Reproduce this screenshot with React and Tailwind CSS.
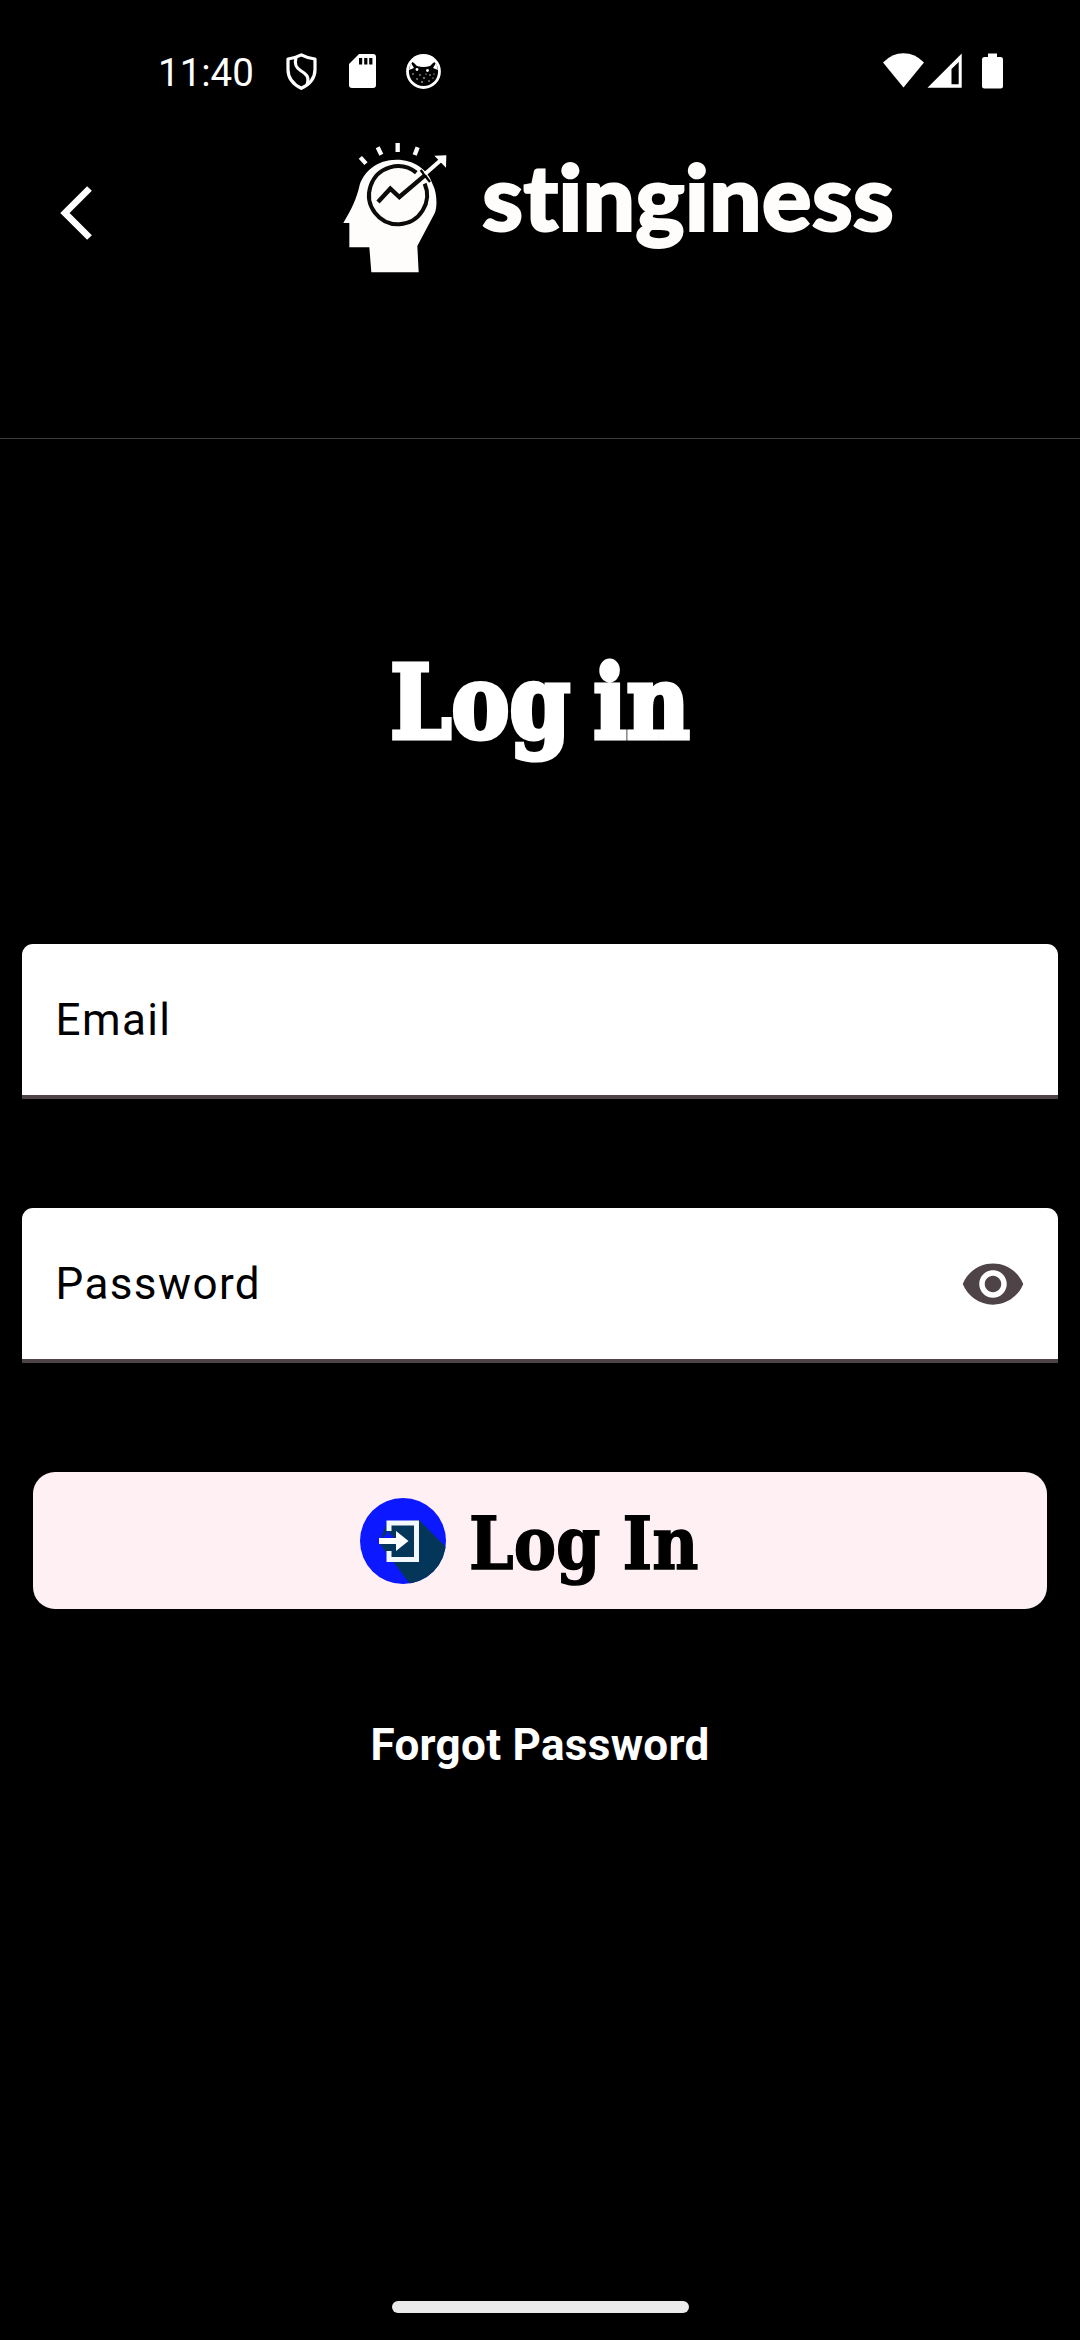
function StatusBar() {
  return (
    <div className="flex h-[132px] items-start pt-[40px] text-white">
      <span className="ml-[158px] w-[118px] whitespace-nowrap pt-[10px] text-[38.5px] leading-[46px]">11:40</span>
      <svg className="h-[60px] w-[180px]" viewBox="276 40 180 60" fill="none">
        <path d="M301.3 54.8C297 57 292.500 58.500 288 59V69.500C288 78.500 293.500 84.500 301.300 88.300C309.500 84.500 315 78.500 315 69.500V59C310 58.500 305.500 57 301.300 54.800Z" stroke="#fff" strokeWidth="3.2" strokeLinejoin="round" />
        <path d="M296 57.500C294 65 296.500 68 300.500 70.500C305.500 73.500 310 76.500 307 84.500" stroke="#fff" strokeWidth="3.2" />
        <path d="M359 54H373Q376 54 376 57V85Q376 88 373 88H352Q349 88 349 85V64Z" fill="#fff" />
        <path d="M359 58h3.200v6.500h-3.200zM364.200 58h3.200v6.500h-3.200zM369.200 58h3.200v6.500h-3.200z" fill="#000" />
        <circle cx="423.500" cy="71.500" r="16" stroke="#fff" strokeWidth="2.8" />
        <path d="M411 61Q415 55 423.500 55T436 61L435 62L433 63L430 66Q423.500 68 417 66L414 63Z" fill="#fff" />
        <path d="M409 70L411 63L414 68ZM438 70L436 63L433 68Z" fill="#fff" />
        <g fill="#fff">
          <circle cx="417" cy="69.500" r="1.400" />
          <circle cx="427.500" cy="70.500" r="1.400" />
          <circle cx="413" cy="74" r="0.700" />
          <circle cx="420" cy="75" r="0.700" />
          <circle cx="424" cy="78" r="0.800" />
          <circle cx="430" cy="75" r="0.700" />
          <circle cx="434" cy="74" r="0.600" />
          <circle cx="417" cy="79" r="0.700" />
          <circle cx="422" cy="82" r="0.800" />
          <circle cx="429" cy="81" r="0.700" />
          <circle cx="426" cy="74" r="0.600" />
          <circle cx="433" cy="78" r="0.600" />
        </g>
      </svg>
      <svg className="ml-[404px] h-[60px] w-[180px]" viewBox="0 0 180 60" fill="#fff">
        <path d="M43.500 47.500L23 22.500Q32 13.300 43.500 13.300T64 22.500Z" />
        <path fillRule="evenodd" d="M101.700 13.500V47.700H67.500ZM98.700 22L91.500 29V44.300H98.700Z" />
        <path d="M128 13.500H137V17H140.500Q143 17 143 19.500V46Q143 48.500 140.500 48.500H124.500Q122 48.500 122 46V19.500Q122 17 124.500 17H128Z" />
      </svg>
    </div>
  );
}

function Brand() {
  return (
    <svg className="-mt-[2px] ml-[225px] h-[160px] w-[600px]" viewBox="0 0 600 160">
      <g transform="scale(.33333)">
        <path d="M230 89C170 89 132 125 119 165C109 210 94 238 70 279H88V352H148L154 427H296L292 348L344 250C352 232 352 190 338 163C323 116 280 89 230 89Z" fill="#fffdfb" />
        <path d="M289 128A87 87 0 1 0 314 161" fill="none" stroke="#0b0b0b" strokeWidth="12" />
        <path d="M174 216L211 176L238 201L318 133" fill="none" stroke="#0b0b0b" strokeWidth="13" />
        <path d="M302 120L330 156" stroke="#000" strokeWidth="7" />
        <path d="M315 132L362 91" stroke="#fffdfb" strokeWidth="12" />
        <path d="M343 77L379 76L378 113Z" fill="#fffdfb" />
        <path d="M121 82L138 101M173 52L184 74M233 39V66M293 52L284 75" stroke="#fffdfb" strokeWidth="13" />
      </g>
      <text className="[font-variant-ligatures:none]" x="162" y="101" fill="#fffdfb" stroke="#fffdfb" strokeWidth="2" fontFamily="Lato, sans-serif" fontWeight="900" fontSize="91" textLength="412" lengthAdjust="spacingAndGlyphs">stinginess</text>
    </svg>
  );
}

function Field({ label, children }) {
  return (
    <div className="flex h-[155px] items-center justify-between rounded-t-[11px] border-b-[4px] border-[#4e4347] bg-white pl-[33.5px] pr-[32px]">
      <span className="pt-[1px] text-[44px] leading-[60px] tracking-[1.4px] text-black">{label}</span>
      {children}
    </div>
  );
}

function EyeIcon() {
  return (
    <svg className="h-[66px] w-[66px]" viewBox="0 0 24 24" fill="#4e4347">
      <path d="M12 4.500C7 4.500 2.730 7.610 1 12c1.730 4.390 6 7.500 11 7.500s9.270-3.110 11-7.500c-1.730-4.390-6-7.500-11-7.500zM12 17c-2.760 0-5-2.240-5-5s2.240-5 5-5 5 2.240 5 5-2.240 5-5 5zm0-8c-1.660 0-3 1.340-3 3s1.340 3 3 3 3-1.340 3-3-1.340-3-3-3z" />
    </svg>
  );
}

function LoginIcon() {
  return (
    <svg className="h-[88px] w-[88px] shrink-0" viewBox="0 0 88 88">
      <defs>
        <clipPath id="disc"><circle cx="44" cy="44" r="43" /></clipPath>
      </defs>
      <circle cx="44" cy="44" r="43" fill="#0c18ff" />
      <path clipPath="url(#disc)" d="M60 23L95 58V95H57L20 46L28 26Z" fill="#04365a" />
      <path clipPath="url(#disc)" d="M18 47L28 36L28 25H30V36L38 44Z" fill="#0c18ff" />
      <path d="M30 34V26H57.500V62.500H30V54" fill="none" stroke="#f2f8fb" strokeWidth="5" />
      <path d="M20 44H40" stroke="#fff" strokeWidth="6" />
      <path d="M37 34L49.500 44L37 54Z" fill="#fff" />
    </svg>
  );
}

export default function App() {
  return (
    <div className="flex h-[2340px] w-[1080px] flex-col overflow-hidden bg-black font-['Roboto',sans-serif]">
      <header className="h-[439px] border-b border-[#3c3c3c]">
        <StatusBar />
        <div className="flex items-start">
          <svg className="ml-[55px] mt-[51px] h-[60px] w-[40px]" viewBox="55 183 40 60" fill="none">
            <path d="M89.500 188.500L65 213L89.500 237.500" stroke="#fff" strokeWidth="6.700" />
          </svg>
          <Brand />
        </div>
      </header>
      <main className="flex flex-col px-[22px]">
        <h1 className="mt-[204px] h-[120px] origin-center scale-x-[0.86] whitespace-nowrap text-center font-['DejaVu_Serif',serif] text-[101px] font-bold leading-[120px] text-white [-webkit-text-stroke:5px_white] [word-spacing:-8px]">Log in</h1>
        <div className="mt-[181px]">
          <Field label="Email" />
        </div>
        <div className="mt-[109px]">
          <Field label="Password"><EyeIcon /></Field>
        </div>
        <button className="mx-[11px] mt-[109px] flex h-[137px] items-center rounded-[22px] bg-[#fff0f4] pl-[326px]">
          <LoginIcon />
          <span className="ml-[22px] origin-left scale-x-[0.87] whitespace-nowrap pt-[4px] font-['DejaVu_Serif',serif] text-[73px] font-bold leading-[90px] text-black [-webkit-text-stroke:1.500px_black]">Log In</span>
        </button>
        <a className="mt-[106px] text-center text-[44px] font-bold leading-[60px] tracking-[0.3px] text-white">Forgot Password</a>
      </main>
      <div className="mx-auto mb-[27px] mt-auto h-[12px] w-[297px] rounded-full bg-[#ebebeb]" />
    </div>
  );
}
